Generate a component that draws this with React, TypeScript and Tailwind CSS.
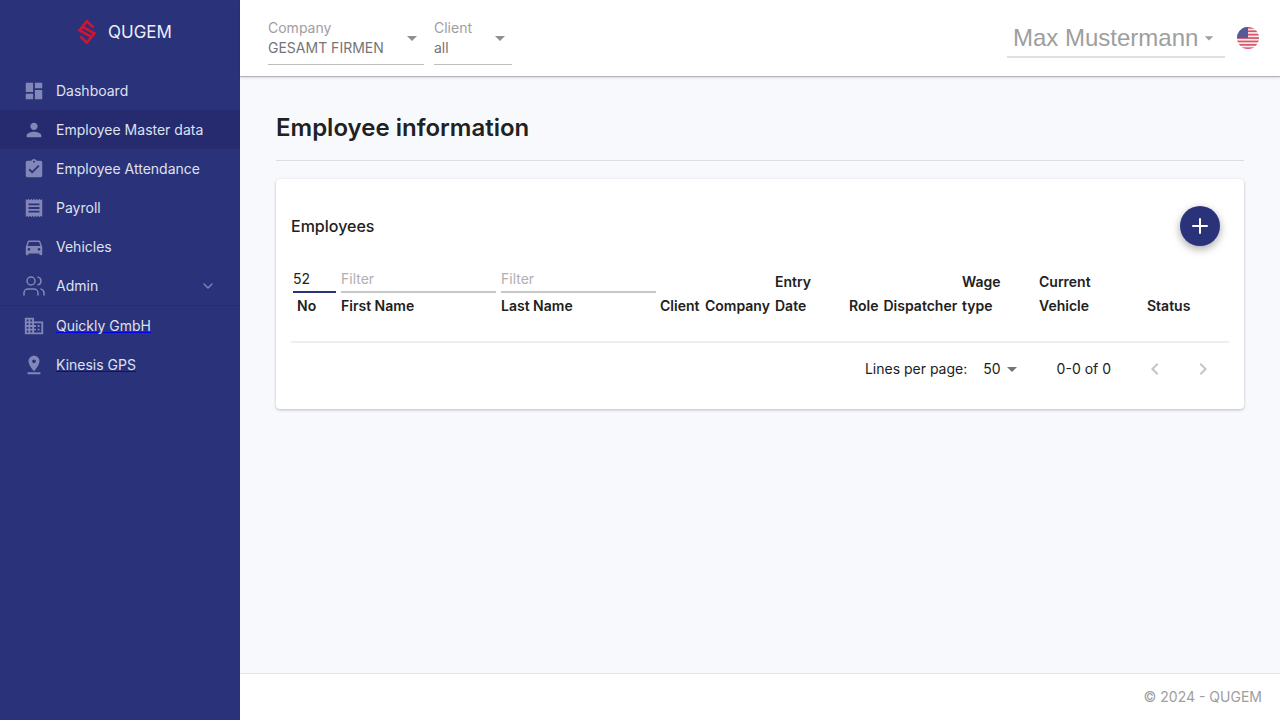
import React from 'react';
import { Users, ChevronDown, Plus } from 'lucide-react';

const icons: Record<string, string> = {
  dashboard: 'M3 13h8V3H3v10zm0 8h8v-6H3v6zm10 0h8V11h-8v10zm0-18v6h8V3h-8z',
  person:
    'M12 12c2.21 0 4-1.79 4-4s-1.79-4-4-4-4 1.79-4 4 1.79 4 4 4zm0 2c-2.67 0-8 1.34-8 4v2h16v-2c0-2.66-5.33-4-8-4z',
  attendance:
    'M19 3h-4.18C14.4 1.84 13.3 1 12 1c-1.3 0-2.4.84-2.82 2H5c-1.1 0-2 .9-2 2v14c0 1.1.9 2 2 2h14c1.1 0 2-.9 2-2V5c0-1.1-.9-2-2-2zm-7 0c.55 0 1 .45 1 1s-.45 1-1 1-1-.45-1-1 .45-1 1-1zm-2 14l-4-4 1.41-1.41L10 14.17l6.59-6.59L18 9l-8 8z',
  receipt:
    'M18 17H6v-2h12v2zm0-4H6v-2h12v2zm0-4H6V7h12v2zM3 22l1.5-1.5L6 22l1.5-1.5L9 22l1.5-1.5L12 22l1.5-1.5L15 22l1.5-1.5L18 22l1.5-1.5L21 22V2l-1.5 1.5L18 2l-1.5 1.5L15 2l-1.5 1.5L12 2l-1.5 1.5L9 2 7.5 3.5 6 2 4.5 3.5 3 2v20z',
  car: 'M18.92 6.01C18.72 5.42 18.16 5 17.5 5h-11c-.66 0-1.21.42-1.42 1.01L3 12v8c0 .55.45 1 1 1h1c.55 0 1-.45 1-1v-1h12v1c0 .55.45 1 1 1h1c.55 0 1-.45 1-1v-8l-2.08-5.99zM6.5 16c-.83 0-1.5-.67-1.5-1.5S5.67 13 6.5 13s1.5.67 1.5 1.5S7.33 16 6.5 16zm11 0c-.83 0-1.5-.67-1.5-1.5s.67-1.5 1.5-1.5 1.5.67 1.5 1.5-.67 1.5-1.5 1.5zM5 11l1.5-4.5h11L19 11H5z',
  domain:
    'M12 7V3H2v18h20V7H12zM6 19H4v-2h2v2zm0-4H4v-2h2v2zm0-4H4V9h2v2zm0-4H4V5h2v2zm4 12H8v-2h2v2zm0-4H8v-2h2v2zm0-4H8V9h2v2zm0-4H8V5h2v2zm10 12h-8v-2h2v-2h-2v-2h2v-2h-2V9h8v10zm-2-8h-2v2h2v-2zm0 4h-2v2h2v-2z',
  pin: 'M18 8c0-3.31-2.69-6-6-6S6 4.69 6 8c0 4.5 6 11 6 11s6-6.5 6-11zm-8 0c0-1.1.9-2 2-2s2 .9 2 2-.89 2-2 2c-1.1 0-2-.9-2-2zM5 20v2h14v-2H5z',
  caret: 'M7 10l5 5 5-5z',
  left: 'M15.41 7.41L14 6l-6 6 6 6 1.41-1.41L10.83 12z',
  right: 'M10 6L8.59 7.41 13.17 12l-4.58 4.59L10 18l6-6z',
};

function Mi({ name, className }: { name: string; className: string }) {
  return (
    <svg viewBox="0 0 24 24" fill="currentColor" className={className}>
      <path d={icons[name]} />
    </svg>
  );
}

function NavIcon({ name }: { name: string }) {
  return (
    <span className="w-6 h-6 flex items-center justify-center">
      <Mi name={name} className="w-[22px] h-[22px] text-[#8287b8]" />
    </span>
  );
}

function Logo() {
  return (
    <svg viewBox="0 0 18 24" className="w-[18px] h-6" fill="none" stroke="#d4142f" strokeWidth="2.6">
      <path d="M15.6 7.6 L8.8 1.2 L1.6 10.4 L13 16.6" />
      <path d="M2.2 16.4 L8.8 22.8 L16.4 13.4 L5 7.2" />
    </svg>
  );
}

function Flag() {
  return (
    <svg viewBox="0 0 22 22" className="w-[22px] h-[22px]">
      <defs>
        <clipPath id="flag-clip">
          <circle cx="11" cy="11" r="11" />
        </clipPath>
      </defs>
      <g clipPath="url(#flag-clip)">
        <rect width="22" height="22" fill="#f3eeee" />
        <rect y="0" width="22" height="1.7" fill="#d9536a" />
        <rect y="3.4" width="22" height="1.7" fill="#d9536a" />
        <rect y="6.8" width="22" height="1.7" fill="#d9536a" />
        <rect y="10.2" width="22" height="1.7" fill="#d9536a" />
        <rect y="13.6" width="22" height="1.7" fill="#d9536a" />
        <rect y="17" width="22" height="1.7" fill="#d9536a" />
        <rect y="20.4" width="22" height="1.7" fill="#d9536a" />
        <rect width="11" height="11" fill="#535c96" />
      </g>
    </svg>
  );
}

const navItems = [
  { label: 'Dashboard', icon: 'dashboard' },
  { label: 'Employee Master data', icon: 'person', active: true },
  { label: 'Employee Attendance', icon: 'attendance' },
  { label: 'Payroll', icon: 'receipt' },
  { label: 'Vehicles', icon: 'car' },
];

function Sidebar() {
  return (
    <nav className="w-[240px] shrink-0 h-full bg-[#2a3279] flex flex-col text-[#dfe1f0] text-sm">
      <div className="h-[71px] pb-[7px] pl-[78px] flex items-center gap-[12px]">
        <Logo />
        <span className="text-[17px] text-[#eceef8]">QUGEM</span>
      </div>
      {navItems.map((item) => (
        <div
          key={item.label}
          className={`h-[39px] flex items-center pl-[22px] gap-[10px] ${item.active ? 'bg-[#252b6e]' : ''}`}
        >
          <NavIcon name={item.icon} />
          <span>{item.label}</span>
        </div>
      ))}
      <div className="h-[40px] flex items-center pl-[22px] gap-[10px] border-b border-[#262d70]">
        <Users className="w-6 h-6 text-[#8287b8]" strokeWidth={1.5} />
        <span className="flex-1">Admin</span>
        <ChevronDown className="w-4 h-4 mr-6 text-[#8287b8]" />
      </div>
      {[
        { label: 'Quickly GmbH', icon: 'domain' },
        { label: 'Kinesis GPS', icon: 'pin' },
      ].map((item) => (
        <div key={item.label} className="h-[39px] flex items-center pl-[22px] gap-[10px]">
          <NavIcon name={item.icon} />
          <span className="underline decoration-[#0000ee]">{item.label}</span>
        </div>
      ))}
    </nav>
  );
}

function HeaderSelect({ label, value, width }: { label: string; value: string; width: string }) {
  return (
    <div className={`${width} h-[49px] pt-[2px] relative border-b border-[#bdbdbd] text-sm leading-5`}>
      <div className="text-[#9e9e9e]">{label}</div>
      <div className="text-[#757575]">{value}</div>
      <Mi name="caret" className="absolute right-0 top-[10px] w-6 h-6 text-[#8f8f8f]" />
    </div>
  );
}

function Header() {
  return (
    <header className="h-[77px] shrink-0 bg-white border-b border-[#b4b4b8] shadow-[0_1px_2px_rgba(0,0,0,0.12)] flex items-start pl-7 pr-[21px] relative">
      <div className="flex gap-[10px] pt-4">
        <HeaderSelect label="Company" value="GESAMT FIRMEN" width="w-[156px]" />
        <HeaderSelect label="Client" value="all" width="w-[78px]" />
      </div>
      <div className="ml-auto flex items-start gap-3 pt-[19px]">
        <div className="w-[218px] h-[39px] border-b-2 border-[#e0e0e0] pl-[6px] flex items-center font-['Liberation_Sans',sans-serif] text-2xl text-[#9e9e9e]">
          Max Mustermann
          <Mi name="caret" className="w-5 h-5 ml-[1px] text-[#9e9e9e]" />
        </div>
        <div className="pt-2">
          <Flag />
        </div>
      </div>
    </header>
  );
}

const widths = [48, 160, 159, 44, 70, 75, 35, 79, 76, 108, 49, 35];

function FilterHead({ value, placeholder, active, right }: { value?: string; placeholder?: string; active?: boolean; right?: string }) {
  return (
    <div
      className={`h-[26px] mb-[1px] border-b-2 font-normal leading-[24px] text-sm ${
        active ? 'ml-[2px] mr-[3px] border-[#2a3279] text-[#212121]' : `${right || 'mr-[3px]'} border-[#c8c8c8] text-[#b0b0b0]`
      }`}
    >
      {value || placeholder}
    </div>
  );
}

function EmployeeTable() {
  const th = 'align-bottom pb-[23px] px-0 pl-[2px] text-left text-sm font-semibold leading-6 text-[#212121]';
  return (
    <table className="table-fixed w-[938px] border-b-2 border-[#eeeeee]">
      <colgroup>
        {widths.map((w, i) => (
          <col key={i} style={{ width: w }} />
        ))}
      </colgroup>
      <thead>
        <tr>
          <th className="align-bottom pb-[23px] text-left text-sm font-semibold leading-6 text-[#212121]">
            <FilterHead value="52" active />
            <div className="pl-[6px]">No</div>
          </th>
          <th className={th}>
            <FilterHead placeholder="Filter" />
            First Name
          </th>
          <th className={th}>
            <FilterHead placeholder="Filter" right="mr-[2px]" />
            Last Name
          </th>
          <th className={th}>Client</th>
          <th className={`${th} !pl-[3px]`}>Company</th>
          <th className={`${th} !pl-[3px]`}>
            Entry
            <br />
            Date
          </th>
          <th className={th}>Role</th>
          <th className={`${th} !pl-[1.5px] whitespace-nowrap`}>Dispatcher</th>
          <th className={`${th} !pl-[1px]`}>
            Wage
            <br />
            type
          </th>
          <th className={th}>
            Current
            <br />
            Vehicle
          </th>
          <th className={th}>Status</th>
          <th className={th}></th>
        </tr>
      </thead>
    </table>
  );
}

function Pagination() {
  return (
    <div className="h-[52px] flex items-center justify-end text-sm text-[#212121] pr-[14px]">
      <span>Lines per page:</span>
      <span className="ml-4">50</span>
      <Mi name="caret" className="w-6 h-6 -ml-px text-[#757575]" />
      <span className="ml-[33px]">0-0 of 0</span>
      <Mi name="left" className="w-6 h-6 ml-8 text-[#c4c4c4]" />
      <Mi name="right" className="w-6 h-6 ml-6 text-[#c4c4c4]" />
    </div>
  );
}

export default function App() {
  return (
    <div className="w-[1280px] h-[720px] flex overflow-hidden font-['Inter',sans-serif]">
      <Sidebar />
      <div className="flex-1 flex flex-col min-w-0">
        <Header />
        <main className="flex-1 bg-[#f8f9fd] px-9 pt-[33px]">
          <h1 className="text-2xl font-semibold leading-9 text-[#212121] pb-[14px] border-b border-[#dcdde3]">
            Employee information
          </h1>
          <section className="mt-[18px] h-[230px] bg-white rounded shadow-[0_1px_3px_rgba(0,0,0,0.25)] pl-[15px] pr-[15px]">
            <div className="h-[88px] pr-[9px] flex items-center justify-between pt-[5px]">
              <span className="text-base font-medium text-[#212121]">Employees</span>
              <button
                type="button"
                className="w-10 h-10 rounded-full bg-[#2a3279] text-white flex items-center justify-center shadow-[0_3px_8px_rgba(0,0,0,0.35)]"
              >
                <Plus className="w-6 h-6" strokeWidth={2} />
              </button>
            </div>
            <EmployeeTable />
            <Pagination />
          </section>
        </main>
        <footer className="h-[47px] shrink-0 bg-white border-t border-[#e4e4e8] flex items-center justify-end pr-[18px] text-sm text-[#9e9e9e]">
          © 2024 - QUGEM
        </footer>
      </div>
    </div>
  );
}
